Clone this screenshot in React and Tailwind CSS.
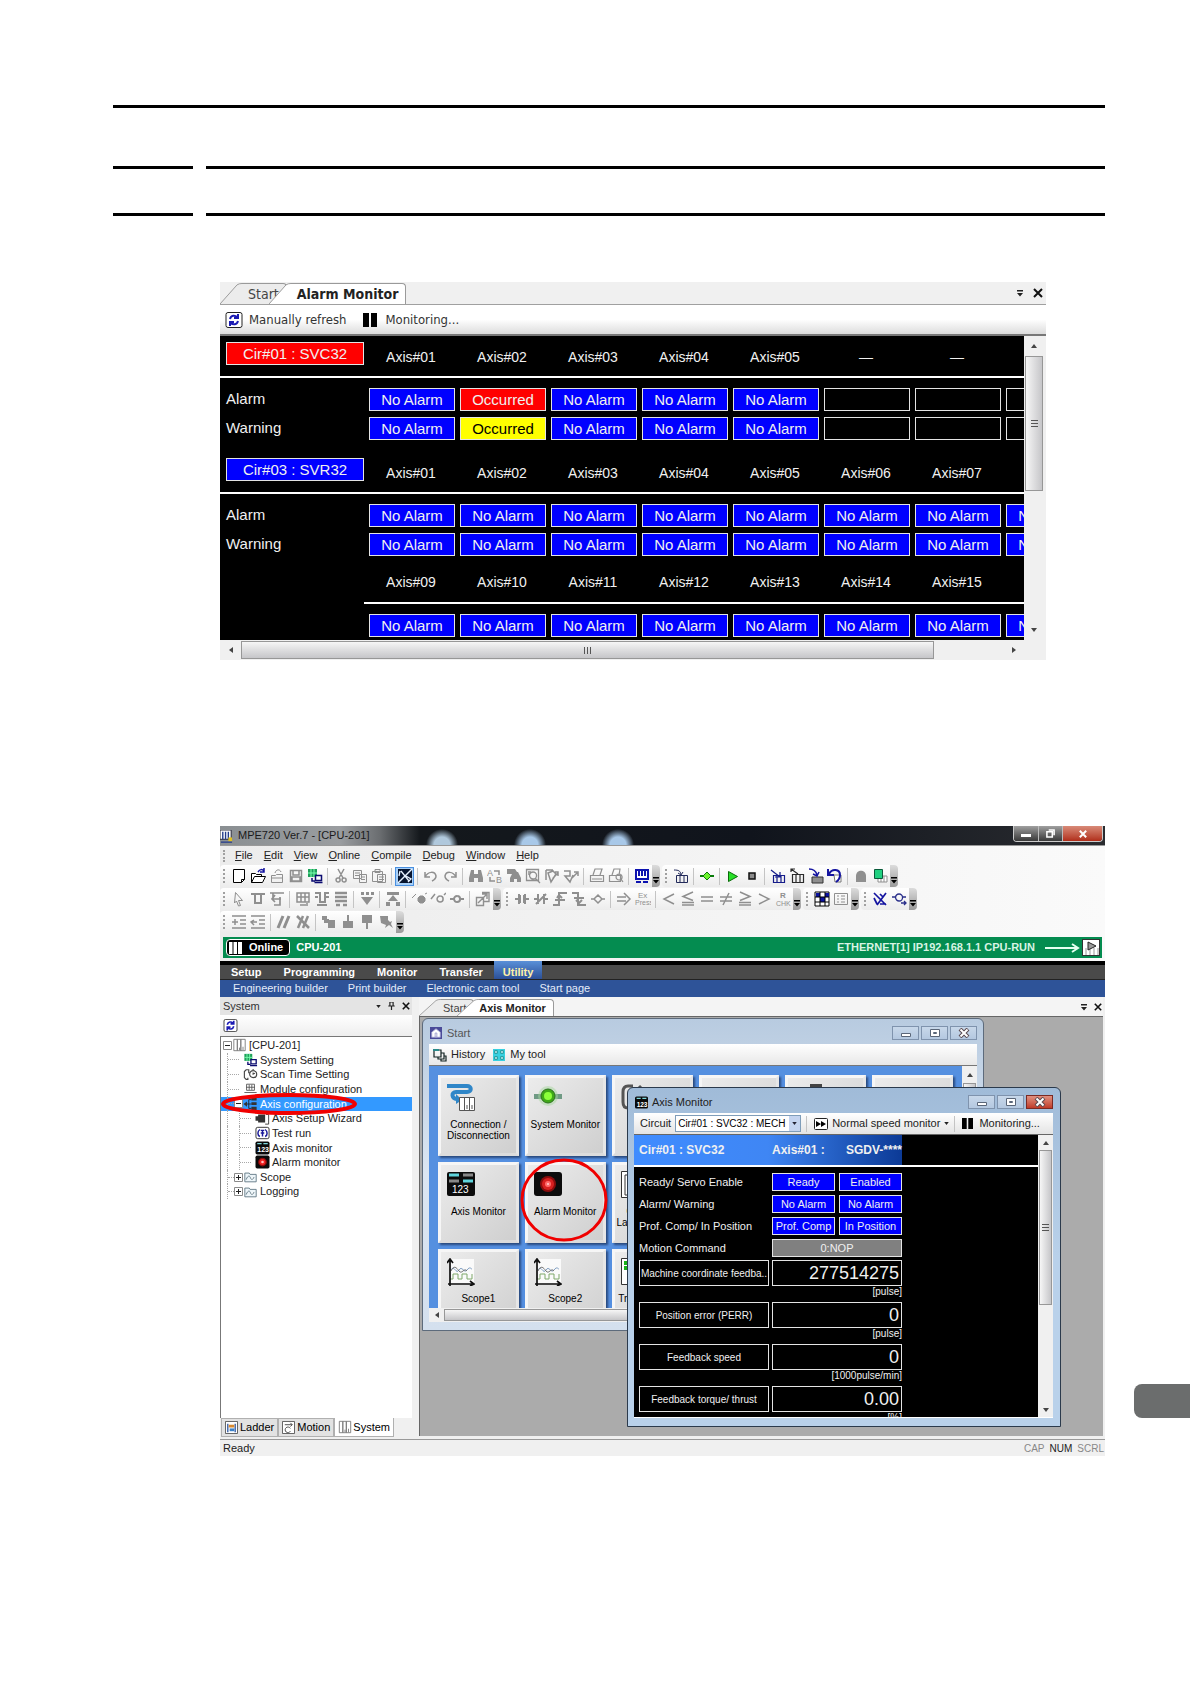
import React from 'react';

const G = '#8f8f8f';
const N = '#1414a0';

// toolbar glyphs, all drawn on a 16x16 grid
const glyphs = {
  new: <path d="M2.5 1.5h11v10l-3 3h-8zM10.5 14.5v-3h3" fill="#fff" stroke="#000" />,
  open: (
    <>
      <path d="M1.5 14.5v-9h4l1 1h5v2M1.5 14.5l3-6h11l-3 6z" fill="#fff" stroke="#000" />
      <path d="M8 4c2-3 4-3 6-1M14 0v4h-4" fill="none" stroke={N} strokeWidth="1.5" />
    </>
  ),
  close: <path d="M2.5 14.5v-7h4l1-1h6v8zM6 5c1-4 5-4 6-1M3 10h10" fill="none" stroke={G} />,
  save: <path d="M2.5 2.5h11v11h-11zM4 9h8v4H4zM5 3v4h6V3" fill="none" stroke={G} strokeWidth="1.5" />,
  board: (
    <>
      <path d="M1 1h9v8H1z" fill="#1fa05a" />
      <path d="M4 1v8M7 1v8M1 5h9" stroke="#7dffb0" />
      <path d="M5 10v3h3M8.500 7.500h6v5h-6zM7.500 14.500h8" fill="#fff" stroke="#0b0b70" strokeWidth="1.5" />
    </>
  ),
  cut: <path d="M5 1l5 9M11 1l-5 9M5 10a2 2 0 1 0 .1 4 2 2 0 0 0 0-4M11 10a2 2 0 1 0 .1 4 2 2 0 0 0 0-4" fill="none" stroke={G} strokeWidth="1.5" />,
  copy: <path d="M1.500 2.500h8v8h-8zM3 5h5M3 7.500h5M7.500 6.500h7v8h-7zM9 9h4M9 11.500h4" fill="#f4f4f4" stroke={G} />,
  paste: <path d="M1.500 3.500h10v10h-10zM4 1.500h5v3H4zM6.500 6.500h8v8h-8zM8 9h5M8 11.500h5" fill="#f4f4f4" stroke={G} />,
  sketch: (
    <>
      <path d="M1 1h14v14H1z" fill="#07142e" />
      <path d="M1 15L15 1" stroke="#e8f2ff" strokeWidth="1.500" />
      <path d="M4 3l8 10M3 3l-1 5M9 8l5 3-3 3" fill="none" stroke="#e8f2ff" strokeWidth="1.300" />
    </>
  ),
  undo: <path d="M2 4v5h5M2 9c3-6 10-6 11-1 0 3-2 4-4 5" fill="none" stroke={G} strokeWidth="1.500" />,
  redo: <path d="M14 4v5H9M14 9C11 3 4 3 3 8c0 3 2 4 4 5" fill="none" stroke={G} strokeWidth="1.500" />,
  find: <path d="M3 2h3v4h4V2h3l2 8v4h-5v-4H6v4H1v-4z" fill={G} />,
  replace: (
    <>
      <text x="0" y="8" fontSize="9" fill={G}>A</text>
      <text x="9" y="15" fontSize="9" fill={G}>B</text>
      <path d="M7 3h5v4M3 9v4h5" fill="none" stroke={G} strokeWidth="1.500" />
    </>
  ),
  findDoc: <path d="M1 1h8l2 3h1l3 6v4h-4v-3H8v3H4v-4l2-4H1z" fill={G} />,
  zoomDoc: <path d="M1.500 1.500h12v11h-12zM3 4h3M3 6h2M8 4a3 3 0 1 0 .1 7A3 3 0 0 0 8 4M10 10l5 5" fill="none" stroke={G} strokeWidth="1.300" />,
  cross: <path d="M2 2h7M2 2v10M4 5l5-2 3 3-5 8zM9 10l5-5M11 4h3v4" fill="none" stroke={G} strokeWidth="1.500" />,
  crossFlag: <path d="M1 3h6v5H2l5 6 3-7M9 10l5-5M11 4h4v4" fill="none" stroke={G} strokeWidth="1.500" />,
  print: <path d="M1.500 7.500h13v6h-13zM4 7l2-6h7l-2 6M3 11h10" fill="none" stroke={G} strokeWidth="1.200" />,
  preview: <path d="M1.500 7.500h11v6h-11zM4 7l2-6h6l-1 6M11 6a3 3 0 1 0 .1 6 3 3 0 0 0 0-6M13 11l2 3" fill="none" stroke={G} strokeWidth="1.200" />,
  monitor: (
    <>
      <path d="M2 2h12v9H2z" fill="#fff" stroke="#0c12b0" strokeWidth="2" />
      <path d="M5 2v6M8 2v6M11 2v6M2 14h5M9 14h5" stroke="#0c12b0" strokeWidth="2" />
    </>
  ),
  rack: <path d="M3.500 7.500h11v7h-11zM7 8v6M11 8v6M1 2c5 0 6 1 7 4M10 4l-2 3-3-2" fill="none" stroke="#222a5a" />,
  link: (
    <>
      <path d="M1 8h14" stroke="#087c08" strokeWidth="2" />
      <path d="M8 4l4 4-4 4-4-4z" fill="#6cf22c" stroke="#0a7a0a" />
    </>
  ),
  run: <path d="M3.500 3.500l9 5-9 5z" fill="#28e028" stroke="#0a6b0a" />,
  halt: <path d="M5 5h6v6H5z" fill="#8a8a8a" stroke="#111" strokeWidth="1.500" />,
  rackIn: <path d="M3.500 7.500h11v7h-11zM7 8v6M11 8v6M1 2l9 7M10 4v5H5" fill="none" stroke="#151c8a" strokeWidth="1.200" />,
  rackOut: <path d="M3.500 6.500h11v8h-11zM7 7v7M11 7v7M9 6L2 1M2 4V1h4" fill="none" stroke="#2b2b2b" strokeWidth="1.200" />,
  box: (
    <>
      <path d="M4 9h11v6H4z" fill="#8f8f8f" stroke="#333" />
      <path d="M1 1c5 0 7 2 8 6M11 4L9 8 5 6" fill="none" stroke={N} strokeWidth="1.500" />
    </>
  ),
  back: (
    <>
      <path d="M7 7h7v7H8z" fill="#fff" stroke="#777" />
      <path d="M1 1v6h6M2 6c3-6 11-5 11 1 0 3-1 5-4 7" fill="none" stroke={N} strokeWidth="2" />
    </>
  ),
  lock: <path d="M3 14V8c0-7 10-7 10 0v6z" fill={G} />,
  chip: (
    <>
      <path d="M6 8h9v6H6zM9 8v6M12 8v6" fill="#fff" stroke={G} />
      <path d="M2.500 1.500h8v9h-8z" fill="#20d080" stroke="#0a5a3a" />
    </>
  ),
  pointer: <path d="M4.500 1.500l7 8h-4l2 5-2 .5-2-5-2 2z" fill="none" stroke={G} />,
  rung: <path d="M1 3h14M5 3v10M11 3v10M5 12h6" fill="none" stroke={G} strokeWidth="2" />,
  rungIn: <path d="M1 2h14M4 2v4M4 8h8M6 4l-3 4 3 3M5 14h6V6" fill="none" stroke={G} strokeWidth="1.700" />,
  blockA: <path d="M2 2h12v9H2zM2 6h12M6 2v9M10 2v9M5 14h6M12 12v3" fill="none" stroke={G} strokeWidth="1.500" />,
  blockB: <path d="M1 2h5v9h5V2h4M1 6h3M12 6h3M3 14h10" fill="none" stroke={G} strokeWidth="2" />,
  blockC: <path d="M2 2h12M2 6h12M2 10h12M3 14h4M10 14h4" stroke={G} strokeWidth="2.500" />,
  down: <path d="M2 1h3v3H2zM7 1h3v3H7zM12 1h3v3h-3zM2 6h12l-6 8z" fill={G} />,
  up: <path d="M2 1h12v3H2zM8 4l5 6H3zM1 11h4v4H1zM11 11h4v4h-4z" fill={G} />,
  coilA: <path d="M1 7l4-4M9 5h3l2 2v3l-2 2H9L7 10V7zM14 3l2-1" fill={G} stroke={G} />,
  coilB: <path d="M1 8l4-5M10 5a3 3 0 1 0 .1 6 3 3 0 0 0 0-6M14 4l2-2" fill="none" stroke={G} strokeWidth="1.500" />,
  coilC: <path d="M1 8h4M11 8h4M8 5a3 3 0 1 0 .1 6 3 3 0 0 0 0-6" fill="none" stroke={G} strokeWidth="2" />,
  jump: <path d="M1.500 6.500h7v8h-7zM7 1.500h7v9H9M3 12l8-8M7 3h5v5" fill="none" stroke={G} strokeWidth="1.400" />,
  contactA: <path d="M1 8h4M11 8h4M5 3v10M11 3v10M6 4v8M10 4v8" stroke={G} strokeWidth="2" />,
  contactB: <path d="M1 8h4M11 8h4M5 3v10M11 3v10M3 13L13 3" stroke={G} strokeWidth="2" />,
  rise: <path d="M1 14h6V2h8M3 9h10M5 7l2-3 3 3" fill="none" stroke={G} strokeWidth="2" />,
  fall: <path d="M1 2h6v12h8M3 7h10M5 9l3 3 3-3" fill="none" stroke={G} strokeWidth="2" />,
  coil: <path d="M1 8h3M12 8h3M8 4L4 8l4 4 4-4z" fill="none" stroke={G} strokeWidth="1.500" />,
  arrow: <path d="M1 6h9M1 10h9M8 2l6 6-6 6" fill="none" stroke={G} strokeWidth="1.500" />,
  exPress: (
    <>
      <text x="3" y="7" fontSize="8" fill={G}>Ex</text>
      <text x="0" y="14" fontSize="7" fill={G}>Press</text>
    </>
  ),
  lt: <path d="M13 3L3 8l10 5" fill="none" stroke={G} strokeWidth="1.500" />,
  le: <path d="M13 1L3 5.500l10 4M2 11.500h12M2 14h12" fill="none" stroke={G} strokeWidth="1.500" />,
  eq: <path d="M2 6h12M2 10h12" stroke={G} strokeWidth="1.500" />,
  ne: <path d="M2 6h12M2 10h12M11 2L5 14" stroke={G} strokeWidth="1.500" />,
  ge: <path d="M3 1l10 4.500-10 4M2 11.500h12M2 14h12" fill="none" stroke={G} strokeWidth="1.500" />,
  gt: <path d="M3 3l10 5-10 5" fill="none" stroke={G} strokeWidth="1.500" />,
  rchk: (
    <>
      <text x="5" y="7" fontSize="8" fontWeight="bold" fill={G}>R</text>
      <text x="1" y="15" fontSize="7" fill={G}>CHK</text>
    </>
  ),
  grid: (
    <>
      <path d="M1 1h14v14H1z" fill="#fff" stroke="#000" />
      <path d="M2 2h4v4H2zM6 6h5v5H6zM11 2h4v4h-4z" fill="#0c12a0" />
      <path d="M6 1v14M11 1v14M1 6h14M1 11h14" stroke="#000" />
    </>
  ),
  list: <path d="M1.500 2.500h13v11h-13zM4 5h2M8 5h4M4 8h2M8 8h4M4 11h2M8 11h4" fill="none" stroke={G} />,
  noTrace: <path d="M2 2l12 12M14 2L5 14M2 7l3 6M8 3l3 3M8 13h6" fill="none" stroke={N} strokeWidth="1.700" />,
  trace: <path d="M1 6h3M12 6h3M8 3a3.500 3.500 0 1 0 .1 7A3.500 3.500 0 0 0 8 3M10 12h5M13 10l2 2-2 2" fill="none" stroke="#2a2f8a" strokeWidth="1.300" />,
  indent: <path d="M1 2h14M9 6h6M9 10h6M1 14h14M1 8h6M4 5v6" fill="none" stroke={G} strokeWidth="1.500" />,
  outdent: <path d="M1 2h14M9 6h6M9 10h6M1 14h14M1 8h6M4 6L1 8l3 3" fill="none" stroke={G} strokeWidth="1.500" />,
  comment: <path d="M2 14L7 2M8 14l5-12" stroke={G} strokeWidth="3" />,
  uncomment: <path d="M3 14L8 2M8 14l5-12M2 2l12 12" stroke={G} strokeWidth="2.500" />,
  markA: <path d="M1 2h5v3h2v1h6v8H7v-5H3V6H1z" fill={G} />,
  markB: <path d="M7 1h2v6h4v7H3V7h4z" fill={G} />,
  markC: <path d="M3 1h10v8H9v6H7V9H3z" fill={G} />,
  markD: <path d="M2 2h8v4l2 2 2-1-1 3 2 4-4-3-4 3 1-3-5-2z" fill={G} />,
};

const Glyph = ({ name }) => (
  <svg viewBox="0 0 16 16" className="h-[16px] w-[16px]" aria-hidden="true">
    {glyphs[name]}
  </svg>
);

const rows = [
  [
    'new open close save board | cut copy paste | *sketch | undo redo | find replace findDoc zoomDoc cross crossFlag | print preview | monitor',
    'rack | link | run halt | rackIn rackOut box back | lock chip',
  ],
  [
    'pointer rung rungIn | blockA blockB blockC | down | up | coilA coilB coilC | jump',
    'contactA contactB rise fall coil | arrow exPress | lt le eq ne ge gt rchk',
    'grid list',
    'noTrace trace',
  ],
  ['indent outdent | comment uncomment | markA markB markC markD'],
];

const ToolStrip = ({ items }) => (
  <div className="flex h-[22px] items-center rounded-sm bg-gradient-to-b from-white to-[#ececec]">
    <span className="ml-[3px] mr-[4px] h-[14px] border-l-2 border-dotted border-[#a0a0a0]" />
    {items.split(' ').map((it, i) =>
      it === '|' ? (
        <span key={i} className="mx-[3px] h-[17px] w-px bg-[#c4c4c4]" />
      ) : (
        <button
          key={i}
          aria-label={it.replace('*', '')}
          className={
            it[0] === '*'
              ? 'flex h-[19px] w-[19px] items-center justify-center border border-[#4a90e0] bg-[#a8d0f8]'
              : 'flex h-[19px] w-[19px] items-center justify-center'
          }
        >
          <Glyph name={it.replace('*', '')} />
        </button>
      )
    )}
    <button aria-label="Toolbar options" className="ml-px flex h-[22px] w-[8px] items-end justify-center rounded-r-sm bg-gradient-to-b from-[#dcdcdc] to-[#9a9a9a] pb-[3px]">
      <svg viewBox="0 0 6 7" className="h-[7px] w-[6px]"><path d="M0 0h6v1.500H0zM0 3h6L3 6.500z" fill="#000" /></svg>
    </button>
  </div>
);

const Arrow = ({ dir }) => {
  const d = { up: 'M1 6l3-4 3 4z', down: 'M1 2l3 4 3-4z', left: 'M6 1L2 4l4 3z', right: 'M2 1l4 3-4 3z' }[dir];
  return (
    <svg viewBox="0 0 8 8" className="h-[8px] w-[8px] shrink-0"><path d={d} fill="#444" /></svg>
  );
};

const VScroll = ({ className, arrow, thumb }) => (
  <div className={`flex shrink-0 flex-col bg-[#f0f0f0] ${className}`}>
    <span className={`flex shrink-0 items-center justify-center ${arrow}`}><Arrow dir="up" /></span>
    <div className="min-h-0 flex-1 px-px">
      <div className={`flex flex-col items-center justify-center gap-[2px] border border-[#979797] bg-gradient-to-r from-[#f6f6f6] to-[#c6c6c9] ${thumb}`}>
        <span className="h-px w-[7px] bg-[#555]" />
        <span className="h-px w-[7px] bg-[#555]" />
        <span className="h-px w-[7px] bg-[#555]" />
      </div>
    </div>
    <span className={`flex shrink-0 items-center justify-center ${arrow}`}><Arrow dir="down" /></span>
  </div>
);

const HScroll = ({ className, arrow, thumb }) => (
  <div className={`flex bg-[#f0f0f0] ${className}`}>
    <span className={`flex shrink-0 items-center justify-center ${arrow}`}><Arrow dir="left" /></span>
    <div className="min-w-0 flex-1 py-px">
      <div className={`flex h-full items-center justify-center gap-[2px] border border-[#979797] bg-gradient-to-b from-[#f6f6f6] to-[#c6c6c9] ${thumb}`}>
        <span className="h-[7px] w-px bg-[#555]" />
        <span className="h-[7px] w-px bg-[#555]" />
        <span className="h-[7px] w-px bg-[#555]" />
      </div>
    </div>
    <span className={`flex shrink-0 items-center justify-center ${arrow}`}><Arrow dir="right" /></span>
  </div>
);

const Tab = ({ label, active, className = '', pad = '' }) => (
  <button role="tab" aria-selected={!!active} className={`flex h-full items-stretch ${className}`}>
    <svg viewBox="0 0 22 22" preserveAspectRatio="none" className="h-full w-[22px]">
      <path d="M0 22L17 2q2-1.500 5-1.500V22z" fill={active ? '#fff' : '#ececec'} />
      <path d="M0 22L17 2q2-1.500 5-1.500" fill="none" stroke="#9a9a9a" />
    </svg>
    <span className={`flex items-center rounded-tr-sm border-r border-t border-[#9a9a9a] pr-[7px] ${pad} ${active ? 'bg-white font-bold text-[#222]' : 'bg-[#ececec] text-[#444]'}`}>
      {label}
    </span>
  </button>
);

const ListMark = () => (
  <svg viewBox="0 0 6 7" className="h-[7px] w-[6px]"><path d="M0 0h6v1.500H0zM0 3h6L3 6.500z" fill="#222" /></svg>
);
const Cross = ({ className }) => (
  <svg viewBox="0 0 10 10" className={className}><path d="M1 1l8 8M9 1L1 9" stroke="#111" strokeWidth="2" /></svg>
);

const RefreshIcon = () => (
  <svg viewBox="0 0 18 16" className="h-full w-full">
    <rect x="1" y="0.500" width="16" height="15" rx="2" fill="#fff" stroke="#222" />
    <path d="M5 7c1-4 5-4 7-2M13 2v4H9M13 9c-1 4-5 4-7 2M5 14v-4h4" fill="none" stroke="#1a1ab4" strokeWidth="2" />
  </svg>
);
const PauseIcon = ({ className }) => (
  <svg viewBox="0 0 14 14" className={className}><path d="M0 0h6v14H0zM8 0h6v14H8z" fill="#000" /></svg>
);

/* ---------- Alarm monitor ---------- */

const OK = 'No Alarm';
const allOk = Array(8).fill(OK);
const circuits = [
  {
    name: 'Cir#01 : SVC32',
    color: 'bg-[#ff0000]',
    axes: ['Axis#01', 'Axis#02', 'Axis#03', 'Axis#04', 'Axis#05', '—', '—', ''],
    alarm: [OK, 'Occurred', OK, OK, OK, '', '', ''],
    warning: [OK, 'Occurred', OK, OK, OK, '', '', ''],
  },
  {
    name: 'Cir#03 : SVR32',
    color: 'bg-[#0000ff]',
    axes: ['Axis#01', 'Axis#02', 'Axis#03', 'Axis#04', 'Axis#05', 'Axis#06', 'Axis#07', ''],
    alarm: allOk,
    warning: allOk,
  },
  {
    axes: ['Axis#09', 'Axis#10', 'Axis#11', 'Axis#12', 'Axis#13', 'Axis#14', 'Axis#15', ''],
    alarm: allOk,
  },
];

const stateColor = (value, kind) => {
  if (!value) return 'bg-black text-white';
  if (value === OK) return 'bg-[#0000ff] text-[#f0f0f0]';
  return kind === 'alarm' ? 'bg-[#ff0000] text-[#f0f0f0]' : 'bg-[#ffff00] text-black';
};

const StateRow = ({ label, values, kind, pad }) => (
  <tr>
    <th scope="row" className={`pl-[6px] text-left font-normal ${pad}`}>{label}</th>
    {values.map((v, i) => (
      <td key={i} className={`pl-[5px] ${pad}`}>
        <div className={`h-[23px] border border-[#e4e4e4] text-center leading-[21px] ${stateColor(v, kind)}`}>{v}</div>
      </td>
    ))}
  </tr>
);

const CircuitTable = ({ circuit }) => (
  <table className="mb-[12px] w-[872px] table-fixed border-separate border-spacing-0 text-[15px] text-[#f0f0f0]">
    <thead>
      <tr className={circuit.name ? 'h-[42px]' : 'h-[36px]'}>
        <th className={`w-[144px] pb-[6px] pl-[6px] font-normal ${circuit.name ? 'border-b-2 border-white' : ''}`}>
          {circuit.name && (
            <div className={`h-[23px] border border-[#e4e4e4] leading-[21px] ${circuit.color}`}>{circuit.name}</div>
          )}
        </th>
        {circuit.axes.map((a, i) => (
          <th key={i} className={`border-b-2 border-white pl-[3px] text-[14px] font-normal ${circuit.name ? 'pt-[2px]' : 'pb-[6px]'}`}>{a}</th>
        ))}
      </tr>
    </thead>
    <tbody>
      <StateRow label={circuit.name && 'Alarm'} values={circuit.alarm} kind="alarm" pad="pt-[10px]" />
      {circuit.warning && <StateRow label="Warning" values={circuit.warning} kind="warning" pad="pt-[6px]" />}
    </tbody>
  </table>
);

const AlarmMonitor = () => (
  <section className="max-w-[826px] bg-[#f0f0f0] font-['DejaVu_Sans_Condensed','DejaVu_Sans',sans-serif]">
    <div role="tablist" className="flex h-[23px] items-end border-b border-[#a0a0a0] pt-px text-[14px]">
      <Tab label="Start" pad="pl-[6px]" />
      <Tab label="Alarm Monitor" active className="-ml-[18px]" pad="pl-[6px]" />
      <div className="mb-[6px] ml-auto mr-[3px] flex items-center gap-[10px]">
        <ListMark />
        <Cross className="h-[10px] w-[10px]" />
      </div>
    </div>
    <div className="flex h-[31px] items-center border-b-2 border-[#777] bg-gradient-to-b from-white via-white to-[#dcdcdc] text-[13px] text-[#333]">
      <button className="ml-[5px] flex items-center gap-[6px]">
        <span className="h-[16px] w-[18px]"><RefreshIcon /></span>
        Manually refresh
      </button>
      <button className="ml-[17px] flex items-center gap-[8px]">
        <PauseIcon className="h-[14px] w-[14px]" />
        Monitoring...
      </button>
    </div>
    <div className="flex h-[304px] font-['Liberation_Sans',Arial,sans-serif]">
      <div className="min-w-0 flex-1 overflow-hidden bg-black">
        {circuits.map((c, i) => (
          <CircuitTable key={i} circuit={c} />
        ))}
      </div>
      <VScroll className="mr-[2px] w-[20px]" arrow="h-[20px]" thumb="h-[135px]" />
    </div>
    <HScroll className="mr-[22px] h-[20px]" arrow="w-[21px]" thumb="w-[91%]" />
  </section>
);

/* ---------- MPE720 window ---------- */

const menus = ['File', 'Edit', 'View', 'Online', 'Compile', 'Debug', 'Window', 'Help'];

const treeIcons = {
  root: <path d="M1.500 1.500h4v13h-4zM5.500 1.500h4v13h-4zM9.500 1.500h5v13h-5zM8 11v3M12 10v4" fill="#fff" stroke="#777" />,
  board: glyphs.board,
  clock: <path d="M5 2H3L1 4v7l2 2h2v-2M3 2h3v4M11 3a4 4 0 1 0 .1 8 4 4 0 0 0 0-8M11 5v2l2-1M11 1v2" fill="none" stroke="#444" strokeWidth="1.300" />,
  module: <path d="M3.500 2.500h9v7h-9zM6.500 3v6M9.500 3v6M3 6h10M1 12h14" fill="none" stroke="#555" />,
  axis: (
    <>
      <path d="M9 1h6v3H9zM9 6h6v3H9zM9 11h6v4H9zM0 8l4-3v6z" fill="#333" />
      <path d="M4 8h5M6 3v10M6 3h3M6 13h3" stroke="#222" fill="none" />
    </>
  ),
  wizard: (
    <>
      <path d="M0 6h3v5H0zM3 4h8v9H3z" fill="#333" />
      <path d="M12 4h3v11h-4" fill="none" stroke="#333" />
    </>
  ),
  test: (
    <>
      <rect x="0.500" y="1.500" width="15" height="13" rx="2" fill="#fff" stroke="#222" />
      <path d="M5 4C2 6 2 11 5 12M11 4c3 2 3 7 0 8M6 5h4M6 8h4M8 5v7" fill="none" stroke="#1a1a9a" strokeWidth="1.700" />
    </>
  ),
  digits: (
    <>
      <rect width="16" height="15" y="0.500" rx="2" fill="#0a0a0a" />
      <path d="M2 3h5M9 3h5" stroke="#7ed8dc" strokeWidth="1.500" />
      <text x="2" y="13" fontSize="8" fontWeight="bold" fill="#fff">123</text>
    </>
  ),
  alarm: (
    <>
      <rect width="16" height="15" y="0.500" rx="2" fill="#0a0a0a" />
      <circle cx="8" cy="8" r="5" fill="#8a0a0a" />
      <circle cx="8" cy="8" r="3.500" fill="#f02020" />
      <circle cx="8" cy="8" r="1.500" fill="#ffc0c0" />
    </>
  ),
  folder: <path d="M1.500 13.500v-10h5l1 1.500h7v8.500zM3 11c2-5 4-5 5-2s3 2 4-1" fill="#eef6fa" stroke="#5c7480" />,
};

const tree = [
  { label: '[CPU-201]', icon: 'root', level: 0, box: '-' },
  { label: 'System Setting', icon: 'board', level: 1 },
  { label: 'Scan Time Setting', icon: 'clock', level: 1 },
  { label: 'Module configuration', icon: 'module', level: 1 },
  { label: 'Axis configuration', icon: 'axis', level: 1, box: '-', selected: true },
  { label: 'Axis Setup Wizard', icon: 'wizard', level: 2 },
  { label: 'Test run', icon: 'test', level: 2 },
  { label: 'Axis monitor', icon: 'digits', level: 2 },
  { label: 'Alarm monitor', icon: 'alarm', level: 2 },
  { label: 'Scope', icon: 'folder', level: 1, box: '+' },
  { label: 'Logging', icon: 'folder', level: 1, box: '+' },
];

const Expander = ({ sign }) => (
  <svg viewBox="0 0 9 9" className="h-[9px] w-[9px] shrink-0">
    <path d="M0.500 0.500h8v8h-8z" fill="#fff" stroke="#8a8a8a" />
    <path d={sign === '+' ? 'M2 4.500h5M4.500 2v5' : 'M2 4.500h5'} stroke="#222" />
  </svg>
);

const TreeRow = ({ node }) => (
  <li className={`relative flex items-center whitespace-nowrap ${node.selected ? 'z-10 bg-[#3399ff] text-white' : 'text-[#222]'}`}>
    {node.level === 0 && <span className="ml-[2px]"><Expander sign={node.box} /></span>}
    {node.level > 0 && <span className="ml-[6px] self-stretch border-l border-dotted border-[#a8a8a8]" />}
    {node.level === 2 && <span className="ml-[11px] self-stretch border-l border-dotted border-[#a8a8a8]" />}
    {node.level > 0 && (
      <span className="flex w-[15px] items-center">
        <span className="flex-1 border-t border-dotted border-[#a8a8a8]" />
        {node.box ? <Expander sign={node.box} /> : <span className="w-[4px]" />}
      </span>
    )}
    <svg viewBox="0 0 16 16" className="h-[14px] w-[15px] shrink-0">{treeIcons[node.icon]}</svg>
    <span className="ml-[2px]">{node.label}</span>
    {node.selected && (
      <svg viewBox="0 0 136 22" className="absolute left-0 top-[-4px] h-[22px] w-[136px]">
        <ellipse cx="68" cy="11" rx="66" ry="9" fill="none" stroke="#f00000" strokeWidth="4" />
      </svg>
    )}
  </li>
);

const Sidebar = () => (
  <aside className="flex w-[192px] shrink-0 flex-col">
    <header className="flex h-[18px] items-center gap-[7px] bg-[#e4e4e4] pl-[3px] pr-[2px] text-[#333]">
      System
      <svg viewBox="0 0 6 4" className="ml-auto h-[3px] w-[5px]"><path d="M0 0h6L3 4z" fill="#222" /></svg>
      <svg viewBox="0 0 8 10" className="h-[8px] w-[7px]"><path d="M2 0h4v5H2zM0 5h8M4 5v5" fill="none" stroke="#222" strokeWidth="1.500" /></svg>
      <Cross className="h-[8px] w-[8px]" />
    </header>
    <div className="flex h-[22px] items-center border-b border-[#777] bg-gradient-to-b from-white to-[#eee] pl-[3px]">
      <button aria-label="Refresh" className="h-[13px] w-[15px]"><RefreshIcon /></button>
    </div>
    <div className="flex-1 border-l border-[#777] bg-white">
      <ul className="grid h-[162px] auto-rows-fr pt-px">
        {tree.map((n) => (
          <TreeRow key={n.label} node={n} />
        ))}
      </ul>
    </div>
    <div role="tablist" className="flex h-[21px] items-start bg-[#f0f0f0] pl-px">
      <button role="tab" className="flex h-[19px] items-center gap-[2px] border border-[#b0b0b0] bg-[#e2e2e2] px-[3px]">
        <svg viewBox="0 0 14 14" className="h-[13px] w-[13px]">
          <path d="M0.500 0.500h13v13h-13z" fill="#fff" stroke="#555" />
          <path d="M3 3v9M11 3v9" stroke="#3a62a8" strokeWidth="1.500" />
          <path d="M4 4h6v3H4z" fill="#d88a30" />
          <path d="M5 8h5v3H5z" fill="#3a80c8" />
        </svg>
        Ladder
      </button>
      <button role="tab" className="flex h-[19px] items-center gap-[2px] border border-[#b0b0b0] bg-[#e2e2e2] px-[3px]">
        <svg viewBox="0 0 14 14" className="h-[13px] w-[13px]">
          <path d="M0.500 0.500h13v13h-13z" fill="#fff" stroke="#555" />
          <path d="M3 4h8M9 2l2 2-2 2M9 8a3 3 0 1 0 0 3" fill="none" stroke="#444" />
        </svg>
        Motion
      </button>
      <button role="tab" aria-selected="true" className="flex h-[19px] items-center gap-px border border-t-0 border-[#b0b0b0] bg-white px-[3px]">
        <svg viewBox="0 0 16 16" className="h-[14px] w-[14px]">{treeIcons.root}</svg>
        System
      </button>
    </div>
  </aside>
);

const WinButtons = ({ closeRed }) => (
  <div className="ml-auto flex gap-[2px]">
    {['Minimize', 'Maximize', 'Close'].map((name, i) => (
      <button
        key={name}
        aria-label={name}
        className={`flex h-[14px] w-[27px] items-center justify-center border ${
          closeRed && i === 2
            ? 'border-[#7a2a24] bg-gradient-to-b from-[#e09080] to-[#c03a28]'
            : 'border-[#7f93ad] bg-gradient-to-b from-[#c8d8ea] to-[#b4c8e0]'
        }`}
      >
        <svg viewBox="0 0 12 10" className="h-[10px] w-[12px]">
          {i === 0 && <path d="M1.500 5.500h9v3h-9z" fill="#fff" stroke="#5a6678" />}
          {i === 1 && <path d="M1.500 1.500h9v7h-9zM4.500 4.500h3v1h-3z" fill="#fff" stroke="#5a6678" />}
          {i === 2 && (
            <>
              <path d="M2 1l8 8M10 1L2 9" stroke="#5a4a50" strokeWidth="4" />
              <path d="M2.500 1.500l7 7M9.500 1.500l-7 7" stroke="#fff" strokeWidth="2" />
            </>
          )}
        </svg>
      </button>
    ))}
  </div>
);

const ScopeArt = () => (
  <>
    <path d="M4 1h23v24H4z" fill="#fafafa" />
    <path d="M4 12c3-6 5 5 8 0s5 4 8 0 4-1 5-1" fill="none" stroke="#7a9ac0" />
    <path d="M4 13c3-6 5-4 8 0s5-4 8 0" fill="none" stroke="#777" />
    <path d="M3 21h3v-5h5v5h4v-5h5v5h5v-5" fill="none" stroke="#7fa86a" />
    <path d="M3 28V2M0 5l3-4 3 4M1 26h26M23 23l4 3-4 2" fill="none" stroke="#111" strokeWidth="1.700" />
  </>
);

const tileArt = {
  connection: (
    <>
      <path d="M0 2h20c5 0 5 6 0 6H9c-5 0-5 7 2 7" fill="none" stroke="#2f86c8" strokeWidth="4" />
      <path d="M9 10l6 6-6 4z" fill="#2f86c8" />
      <path d="M12.500 13.500h15v13h-15zM17.500 14v12M22.500 14v12M20 21v4M25 21v4" fill="#fff" stroke="#555" />
    </>
  ),
  system: (
    <>
      <path d="M0 10h28v5H0z" fill="#6f9a84" />
      <circle cx="14" cy="12" r="10" fill="#a8d8a0" opacity="0.500" />
      <circle cx="14" cy="12" r="7" fill="#3fa818" stroke="#2d7020" />
      <circle cx="14" cy="12" r="4" fill="#8cff3a" />
    </>
  ),
  link: <path d="M12 2H7Q2 2 2 8v10q0 6 5 6h4M12 12v6M18 2l2 2" fill="none" stroke="#555" strokeWidth="3" />,
  none: null,
  dark: <path d="M16 0h12v10H16z" fill="#444" />,
  axis: (
    <>
      <rect y="1" width="28" height="24" rx="2" fill="#0c0c0c" />
      <path d="M2 4h10M16 10h10" stroke="#5fd4dc" strokeWidth="3" />
      <path d="M16 4h10M2 10h10" stroke="#888" strokeWidth="3" />
      <text x="5" y="22" fontSize="10" fill="#fff">123</text>
    </>
  ),
  alarm: (
    <>
      <rect y="1" width="28" height="24" rx="3" fill="#0c0c0c" />
      <circle cx="14" cy="13" r="8" fill="#8a0c0c" />
      <circle cx="14" cy="13" r="6" fill="#d82020" />
      <circle cx="14" cy="13" r="3" fill="#ff6a6a" />
      <circle cx="14" cy="13" r="1" fill="#ffd0d0" />
    </>
  ),
  page: <path d="M0.500 0.500h22v26H0.500zM4 4h16v20H4z" fill="#fff" stroke="#333" />,
  green: (
    <>
      <path d="M0.500 0.500h24v26H0.500z" fill="#fff" stroke="#333" />
      <path d="M3 3h5v4H3zM9 3h5v4H9zM3 8h5v4H3zM9 8h5v4H9z" fill="#18b018" />
    </>
  ),
  scope: <ScopeArt />,
};

const tiles = [
  ['connection', 'Connection / Disconnection'],
  ['system', 'System Monitor'],
  ['link', ''],
  ['none', ''],
  ['dark', ''],
  ['none', ''],
  ['axis', 'Axis Monitor'],
  ['alarm', 'Alarm Monitor'],
  ['page', 'Create new Ladder program'],
  ['none', ''],
  ['none', ''],
  ['none', ''],
  ['scope', 'Scope1'],
  ['scope', 'Scope2'],
  ['green', 'Trace manager'],
  ['none', ''],
  ['none', ''],
  ['none', ''],
];

const Tile = ({ art, label }) => (
  <button
    aria-label={label || art}
    className="relative flex h-[81px] flex-col border-[3px] border-[#f6f6f6] border-b-[#dcdcdc] border-r-[#e6e6e6] bg-gradient-to-br from-[#ececec] to-[#cfcfcf] pt-[6px] shadow-[2px_2px_2px_#2a4a80]"
  >
    <svg viewBox="0 0 28 28" className="ml-[6px] h-[28px] w-[28px] shrink-0">{tileArt[art]}</svg>
    <span className="mt-[7px] w-full text-center text-[10px] leading-[11px] text-black">{label}</span>
    {art === 'alarm' && (
      <svg viewBox="0 0 88 84" className="absolute left-[-8px] top-[-7px] z-10 h-[84px] w-[88px]">
        <ellipse cx="44" cy="42" rx="42" ry="40" fill="none" stroke="#f00000" strokeWidth="3" />
      </svg>
    )}
  </button>
);

const StartWindow = () => (
  <div className="absolute left-[2px] top-px flex h-[313px] w-[562px] flex-col rounded-t-md border border-[#5d6b7c] bg-gradient-to-b from-[#b8cbe0] via-[#dce6f2] to-[#d4e0ee] px-[6px] pb-[8px]">
    <div className="flex h-[25px] items-center pt-[3px] text-[#555]">
      <svg viewBox="0 0 14 14" className="ml-px mr-[5px] h-[12px] w-[12px]">
        <path d="M0 0h14v14H0z" fill="#4a4a98" />
        <path d="M7 2l5 4v6H2V6zM6 7h2v5H6z" fill="#fff" stroke="#99c" />
      </svg>
      Start
      <WinButtons />
    </div>
    <div className="flex h-[22px] shrink-0 items-center border-b border-[#777] bg-gradient-to-b from-white to-[#e8e8e8] pl-[4px] text-[#222]">
      <button className="flex items-center gap-[4px]">
        <svg viewBox="0 0 14 14" className="h-[14px] w-[14px]">
          <path d="M1 2h7v7H1zM8 5h3v6H5V9M11 8h2v5H8v-2" fill="none" stroke="#122" strokeWidth="1.200" />
          <path d="M0 1h6v2H0z" fill="#2a8a8a" />
        </svg>
        History
      </button>
      <button className="ml-[8px] flex items-center gap-[5px]">
        <svg viewBox="0 0 14 14" className="h-[12px] w-[12px]">
          <path d="M0 0h14v14H0z" fill="#38d0e0" />
          <path d="M2 2h3v3H2zM9 2h3v3H9zM2 9h3v3H2zM9 9h3v3H9z" fill="#d8faff" stroke="#188" />
        </svg>
        My tool
      </button>
    </div>
    <div className="flex min-h-0 flex-1">
      <div className="flex min-w-0 flex-1 flex-col">
        <div className="min-h-0 flex-1 overflow-hidden bg-[#5590e0] px-[9px] pt-[9px]">
          <div className="grid grid-cols-6 gap-[6px]">
            {tiles.map(([art, label], i) => (
              <Tile key={i} art={art} label={label} />
            ))}
          </div>
        </div>
        <HScroll className="h-[14px]" arrow="w-[15px]" thumb="w-[92%]" />
      </div>
      <VScroll className="w-[15px]" arrow="h-[17px]" thumb="h-[150px]" />
    </div>
  </div>
);

const axisStates = [
  ['Ready/ Servo Enable', 'Ready', 'Enabled'],
  ['Alarm/ Warning', 'No Alarm', 'No Alarm'],
  ['Prof. Comp/ In Position', 'Prof. Comp', 'In Position'],
];
const axisValues = [
  ['Machine coordinate feedba..', '277514275', '[pulse]'],
  ['Position error (PERR)', '0', '[pulse]'],
  ['Feedback speed', '0', '[1000pulse/min]'],
  ['Feedback torque/ thrust', '0.00', '[%]'],
];

const AxisWindow = () => (
  <div className="absolute left-[207px] top-[70px] flex h-[340px] w-[434px] flex-col rounded-t-md border border-[#2b3a4c] bg-gradient-to-b from-[#a0bbd8] via-[#b9d1ea] to-[#b9d1ea] pb-[8px] pl-[6px] pr-[7px]">
    <div className="flex h-[25px] shrink-0 items-center pt-[3px] text-[#222]">
      <svg viewBox="0 0 16 16" className="ml-px mr-[4px] h-[13px] w-[13px]">{treeIcons.digits}</svg>
      Axis Monitor
      <WinButtons closeRed />
    </div>
    <div className="flex h-[22px] shrink-0 items-center whitespace-nowrap border-b border-[#666] bg-gradient-to-b from-white to-[#e4e4e4] pl-[6px] text-[#222]">
      <label htmlFor="circuit">Circuit</label>
      <div className="relative ml-[4px]">
        <select id="circuit" className="h-[17px] w-[126px] appearance-none border border-[#7f9db9] bg-white pl-[2px] text-[10px] text-black">
          <option>Cir#01 : SVC32 : MECH</option>
        </select>
        <span className="pointer-events-none absolute bottom-px right-px top-px flex w-[11px] items-center justify-center bg-[#c4d4f0]">
          <svg viewBox="0 0 6 4" className="h-[3px] w-[5px]"><path d="M0 0h6L3 4z" fill="#223" /></svg>
        </span>
      </div>
      <span className="ml-[5px] h-[16px] w-px bg-[#c4c4c4]" />
      <button className="ml-[7px] flex items-center gap-[4px]">
        <svg viewBox="0 0 14 12" className="h-[12px] w-[14px]">
          <rect x="0.500" y="0.500" width="13" height="11" rx="1" fill="#fff" stroke="#222" />
          <path d="M2 3l5 3-5 3zM7 3l5 3-5 3z" fill="#000" />
        </svg>
        Normal speed monitor
        <svg viewBox="0 0 6 4" className="h-[3px] w-[5px]"><path d="M0 0h6L3 4z" fill="#222" /></svg>
      </button>
      <span className="ml-[5px] h-[16px] w-px bg-[#c4c4c4]" />
      <button className="ml-[7px] flex items-center gap-[6px]">
        <PauseIcon className="h-[11px] w-[11px]" />
        Monitoring...
      </button>
    </div>
    <div className="flex min-h-0 flex-1 border-b border-white">
      <div className="min-w-0 flex-1 overflow-hidden bg-black text-[#f0f0f0]">
        <div className="border-b-2 border-white">
          <div className="flex h-[30px] w-[268px] items-center justify-between bg-gradient-to-r from-[#3f8cff] via-[#3f86f4] to-[#0c3a96] pl-[5px] text-[12px] font-bold">
            <span>Cir#01 : SVC32</span>
            <span className="flex w-[130px] justify-between">
              <span>Axis#01 :</span>
              <span>SGDV-****</span>
            </span>
          </div>
        </div>
        <div className="flex w-[268px] flex-col gap-[4px] pl-[5px] pt-[6px]">
          {axisStates.map(([label, a, b]) => (
            <div key={label} className="flex h-[18px] items-center gap-[4px]">
              <span className="flex-1 whitespace-nowrap">{label}</span>
              <span className="h-[18px] w-[63px] border border-[#e4e4e4] bg-[#0000ff] text-center leading-[16px]">{a}</span>
              <span className="h-[18px] w-[63px] border border-[#e4e4e4] bg-[#0000ff] text-center leading-[16px]">{b}</span>
            </div>
          ))}
          <div className="flex h-[18px] items-center">
            <span className="flex-1">Motion Command</span>
            <span className="h-[18px] w-[130px] border border-[#e4e4e4] bg-[#808080] text-center leading-[16px]">0:NOP</span>
          </div>
        </div>
        <div className="flex w-[268px] flex-col pl-[5px] pt-[3px]">
          {axisValues.map(([label, value, unit]) => (
            <div key={label} className="h-[42px] shrink-0">
              <div className="flex h-[26px] justify-between">
                <button className="w-[130px] whitespace-nowrap border border-[#e4e4e4] text-center text-[10px]">{label}</button>
                <output className="w-[130px] border border-[#e4e4e4] pr-[2px] text-right text-[18px] leading-[25px]">{value}</output>
              </div>
              <div className="text-right text-[10px] leading-[12px]">{unit}</div>
            </div>
          ))}
        </div>
      </div>
      <VScroll className="w-[15px]" arrow="h-[15px]" thumb="h-[155px]" />
    </div>
  </div>
);

const MainWindow = () => (
  <section className="min-w-0 flex-1 bg-[#f0f0f0] font-['Liberation_Sans',Arial,sans-serif] text-[11px]">
    <header className="flex h-[20px] items-start border-b border-[#999] bg-[radial-gradient(ellipse_16px_16px_at_222px_19px,#b0c8dc_50%,transparent),radial-gradient(ellipse_16px_16px_at_310px_19px,#a8c8e8_50%,transparent),radial-gradient(ellipse_16px_16px_at_398px_19px,#a8c8e8_50%,transparent),linear-gradient(to_right,#8a8f92,#9a9da0_120px,#6a6d70_160px,#14181c_200px,#10141c_60%,#2a2c30)]">
      <svg viewBox="0 0 14 14" className="mr-[5px] mt-[4px] h-[13px] w-[13px]">
        <path d="M0 0h12v10H0z" fill="#fff" stroke="#223" />
        <path d="M3 2v8M6 2v8M9 2v8M1 13h12" stroke="#223a8a" strokeWidth="1.500" />
        <path d="M9 8h4v4H9z" fill="#e0c020" />
      </svg>
      <span className="leading-[19px] text-[#1a1a1a]">MPE720 Ver.7 - [CPU-201]</span>
      <div className="ml-auto mr-[2px] flex h-[16px] overflow-hidden rounded-b border border-t-0 border-[#ccc]">
        <button aria-label="Minimize" className="flex w-[25px] items-center justify-center border-r border-[#bbb] bg-gradient-to-b from-[#a0a0a0] to-[#3a3a3a]">
          <span className="mt-[3px] h-[3px] w-[10px] bg-white" />
        </button>
        <button aria-label="Restore" className="flex w-[24px] items-center justify-center border-r border-[#bbb] bg-gradient-to-b from-[#a0a0a0] to-[#3a3a3a]">
          <svg viewBox="0 0 10 10" className="h-[9px] w-[9px]"><path d="M3 1h6v6M1 3h6v6H1z" fill="none" stroke="#fff" strokeWidth="1.700" /></svg>
        </button>
        <button aria-label="Close" className="flex w-[39px] items-center justify-center bg-gradient-to-b from-[#d88a78] to-[#b02c18]">
          <svg viewBox="0 0 10 10" className="h-[8px] w-[8px]"><path d="M1 1l8 8M9 1L1 9" stroke="#fff" strokeWidth="2.500" /></svg>
        </button>
      </div>
    </header>
    <div className="bg-gradient-to-r from-[#ececec] to-[#fafafa]">
      <nav className="flex h-[19px] items-center gap-[11px] pl-[3px] text-[#222]">
        <span className="-mr-[1px] h-[12px] border-l-2 border-dotted border-[#a0a0a0]" />
        {menus.map((m) => (
          <button key={m}><u>{m[0]}</u>{m.slice(1)}</button>
        ))}
      </nav>
      <div className="flex flex-col gap-px">
        {rows.map((strips, i) => (
          <div key={i} className="flex gap-[2px]">
            {strips.map((s) => (
              <ToolStrip key={s} items={s} />
            ))}
          </div>
        ))}
      </div>
      <div className="px-[3px] pb-[3px] pt-[4px]">
        <div className="flex h-[21px] items-center bg-[#048c50] pl-[3px] font-bold text-white">
          <span className="flex h-[17px] items-center gap-[7px] rounded-sm border border-white bg-black pl-[2px] pr-[6px]">
            <svg viewBox="0 0 13 12" className="h-[12px] w-[13px]"><path d="M0 0h3.500v12H0zM4.500 0H8v12H4.500zM9 0h4v12H9z" fill="#fff" /></svg>
            Online
          </span>
          <span className="ml-[6px]">CPU-201</span>
          <span className="ml-auto text-[#d8f4e4]">ETHERNET[1] IP192.168.1.1 CPU-RUN</span>
          <svg viewBox="0 0 36 12" className="ml-[9px] h-[12px] w-[36px]"><path d="M1 6h32M28 2l6 4-6 4" fill="none" stroke="#e4fff0" strokeWidth="2" /></svg>
          <button aria-label="CPU status" className="mx-[2px] h-[17px] w-[18px] border border-[#333] bg-white">
            <svg viewBox="0 0 16 15" className="h-[15px] w-[16px]"><path d="M3 15V8M7 15V8M11 15V8M15 15V8" stroke="#999" /><path d="M5 2l8 4-8 4z" fill="#999" stroke="#222" /></svg>
          </button>
        </div>
      </div>
    </div>
    <nav className="flex h-[19px] items-end border-b border-t-4 border-b-[#222] border-t-black bg-[#4a4a4a] font-bold text-white">
      {['Setup', 'Programming', 'Monitor', 'Transfer'].map((m) => (
        <button key={m} className="h-[14px] px-[11px] leading-[14px]">{m}</button>
      ))}
      <button className="h-[18px] bg-gradient-to-b from-[#5a90d8] to-[#2c5098] px-[9px] pt-[4px] leading-[14px] text-[#fff0a8]">Utility</button>
    </nav>
    <nav className="flex h-[17px] items-center gap-[20px] bg-[#2e5398] pl-[13px] text-[#e4ecf8]">
      <button>Engineering builder</button>
      <button>Print builder</button>
      <button>Electronic cam tool</button>
      <button>Start page</button>
    </nav>
    <div className="flex h-[442px]">
      <Sidebar />
      <div className="ml-[7px] flex min-w-0 flex-1 flex-col pr-[2px]">
        <div role="tablist" className="flex h-[19px] items-end bg-[#f4f4f4] pt-[2px]">
          <Tab label="Start" pad="pl-[2px]" />
          <Tab label="Axis Monitor" active className="-ml-[17px]" />
          <div className="mb-[5px] ml-auto mr-px flex items-center gap-[7px]">
            <ListMark />
            <Cross className="h-[8px] w-[8px]" />
          </div>
        </div>
        <div className="relative min-h-0 flex-1 overflow-hidden border-l border-t border-[#666] bg-[#ababab]">
          <StartWindow />
          <AxisWindow />
        </div>
        <div className="h-[3px]" />
      </div>
    </div>
    <footer className="flex h-[17px] items-center gap-[5px] border-t border-[#999] pl-[3px] pr-px pt-px text-[#222]">
      <span className="mr-auto">Ready</span>
      <span className="text-[10px] text-[#888]">CAP</span>
      <span className="text-[10px]">NUM</span>
      <span className="text-[10px] text-[#888]">SCRL</span>
    </footer>
  </section>
);

export default function App() {
  return (
    <main className="min-h-screen bg-white pb-[60px] pl-[113px] pt-[105px]">
      <div className="mr-[85px]">
        <div className="h-[3px] bg-black" />
        <div className="mt-[58px] flex gap-[13px]">
          <div className="h-[50px] w-[80px] border-y-[3px] border-black" />
          <div className="h-[50px] flex-1 border-y-[3px] border-black" />
        </div>
        <div className="pl-[107px] pt-[66px]">
          <AlarmMonitor />
        </div>
      </div>
      <div className="mt-[166px] flex pl-[107px]">
        <MainWindow />
        <aside className="flex w-[85px] shrink-0 items-end justify-end pb-[38px]">
          <div className="h-[34px] w-[56px] rounded-l-lg bg-[#6b6d6d]" />
        </aside>
      </div>
    </main>
  );
}
